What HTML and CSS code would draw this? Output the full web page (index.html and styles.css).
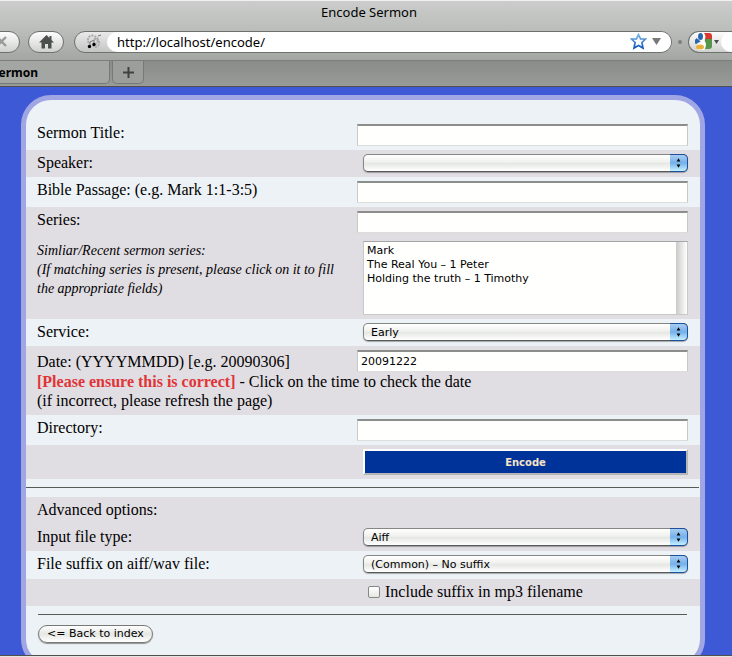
FILE: index.html
```html
<!DOCTYPE html>
<html lang="en">
<head>
<meta charset="UTF-8">
<meta name="viewport" content="width=device-width, initial-scale=1.0">
<title>Encode Sermon</title>
<link rel="stylesheet" href="styles.css">
</head>
<body>
<header class="browser">
    <div class="titlebar">Encode Sermon</div>
    <div class="toolbar">
        <button type="button" class="pill stop" aria-label="Stop">
            <svg width="12" height="12" viewBox="0 0 12 12"><path d="M1 1L10 10M10 1L1 10" stroke="#999b99" stroke-width="2.4" fill="none"/></svg>
        </button>
        <button type="button" class="pill home" aria-label="Home">
            <svg width="15" height="14" viewBox="0 0 15 14"><path d="M7.5 0L10.5 3V1H12.500V5L15 7.500H12.500V13.500H9V9H6V13.500H2.500V7.500H0Z" fill="#4c504d"/></svg>
        </button>
        <div class="location">
            <span class="favicon">
                <svg width="17" height="16" viewBox="0 0 17 16"><path d="M3 9C0 5 4 0 8 2C12 3 13 7 10 10M8 5C12 4 15 8 12 12C10 14 7 13 8 11" stroke="#a9aaa9" stroke-width="2" stroke-dasharray="2 1" fill="none"/><path d="M4 12V8L8 6V10" stroke="#777" fill="none"/><circle cx="3.500" cy="12.500" r="1.700"/><circle cx="8" cy="10.500" r="1.700"/><path d="M12 2L15 1" stroke="#777"/></svg>
            </span>
            <div class="urlbox">
                <input type="text" class="url" aria-label="Address" value="http://localhost/encode/">
                <svg width="17" height="17" viewBox="0 0 17 17"><defs><linearGradient id="star" x1="0" y1="0" x2="0" y2="1"><stop offset="0" stop-color="#79b2e3"/><stop offset="1" stop-color="#1458b8"/></linearGradient></defs><path d="M8.500 1.500L10.600 6H15.500L11.900 9.500L13 15L8.500 12.500L4 15L5.100 9.500L1.500 6H6.400Z" fill="#f7fbff" stroke="url(#star)" stroke-width="1.700"/></svg>
                <svg class="drop" width="9" height="7" viewBox="0 0 9 7"><path d="M0 0H9L4.500 7Z" fill="#777977"/></svg>
            </div>
        </div>
        <span class="grip"></span>
        <div class="search">
            <svg width="17" height="17" viewBox="0 0 17 17"><path d="M8 0H14Q17 0 17 3V6H8Z" fill="#d8382f"/><path d="M10 6H17V13Q17 16 14 16H9Z" fill="#55964c"/><path d="M1 5L6 8L1 11Z" fill="#2967ac"/><path d="M9 0Q12 4 9 7Q13 12 9 17H3Q0 13 3 11L7 9Q2 7 3 0Z" fill="#fff"/><ellipse cx="5.500" cy="3.500" rx="2.500" ry="3.500" fill="#2967ac"/><path d="M0 6L4 8.500L0 11Z" fill="#2967ac"/><ellipse cx="5" cy="14" rx="4" ry="2.500" fill="#e7b13c"/></svg>
            <svg width="5" height="4" viewBox="0 0 5 4"><path d="M0 0H5L2.500 4Z" fill="#4c504d"/></svg>
            <span class="searchbox"></span>
        </div>
    </div>
    <div class="tabs">
        <div class="tab">Sermon</div>
        <button type="button" class="newtab" aria-label="New tab">
            <svg width="11" height="11" viewBox="0 0 11 11"><path d="M5.500 0V11M0 5.500H11" stroke="#3f423f" stroke-width="2"/></svg>
        </button>
    </div>
</header>

<main class="page">
    <form class="card">
        <div class="row">
            <label for="title">Sermon Title:</label>
            <input type="text" class="text" id="title">
        </div>
        <div class="row short dark">
            <label for="speaker">Speaker:</label>
            <div class="popup"><select id="speaker"><option></option></select><svg width="18" height="16" viewBox="0 0 18 16"><path d="M7 6.500L9 3L11 6.500ZM7 9.500L9 13L11 9.500Z"/></svg></div>
        </div>
        <div class="row">
            <label for="passage">Bible Passage: (e.g. Mark 1:1-3:5)</label>
            <input type="text" class="text" id="passage">
        </div>
        <div class="row dark">
            <label for="series">Series:</label>
            <input type="text" class="text" id="series">
        </div>
        <div class="row recent dark">
            <label for="recent" class="hint">Simliar/Recent sermon series:<br>(If matching series is present, please click on it to fill the appropriate fields)</label>
            <select class="list" id="recent" size="5">
                <option>Mark</option>
                <option>The Real You – 1 Peter</option>
                <option>Holding the truth – 1 Timothy</option>
            </select>
        </div>
        <div class="row short">
            <label for="service">Service:</label>
            <div class="popup"><select id="service"><option>Early</option></select><svg width="18" height="16" viewBox="0 0 18 16"><path d="M7 6.500L9 3L11 6.500ZM7 9.500L9 13L11 9.500Z"/></svg></div>
        </div>
        <div class="row date dark">
            <label for="date">Date: (YYYYMMDD) [e.g. 20090306]</label>
            <input type="text" class="text" id="date" value="20091222">
            <p class="note"><strong>[Please ensure this is correct]</strong> - Click on the time to check the date<br>(if incorrect, please refresh the page)</p>
        </div>
        <div class="row">
            <label for="directory">Directory:</label>
            <input type="text" class="text" id="directory">
        </div>
        <div class="row submit dark">
            <button type="submit" class="encode">Encode</button>
        </div>
        <hr class="divider">
        <div class="row short dark">
            <span class="heading">Advanced options:</span>
        </div>
        <div class="row short dark">
            <label for="filetype">Input file type:</label>
            <div class="popup"><select id="filetype"><option>Aiff</option></select><svg width="18" height="16" viewBox="0 0 18 16"><path d="M7 6.500L9 3L11 6.500ZM7 9.500L9 13L11 9.500Z"/></svg></div>
        </div>
        <div class="row suffix">
            <label for="suffix">File suffix on aiff/wav file:</label>
            <div class="popup"><select id="suffix"><option>(Common) – No suffix</option></select><svg width="18" height="16" viewBox="0 0 18 16"><path d="M7 6.500L9 3L11 6.500ZM7 9.500L9 13L11 9.500Z"/></svg></div>
        </div>
        <div class="row short dark">
            <div class="check">
                <input type="checkbox" id="include">
                <label for="include">Include suffix in mp3 filename</label>
            </div>
        </div>
        <div class="footer">
            <button type="button" class="back">&lt;= Back to index</button>
        </div>
    </form>
</main>
</body>
</html>
```
FILE: styles.css
```css
* {
    box-sizing: border-box;
}
body {
    margin: 0;
    height: 100vh;
    display: flex;
    flex-direction: column;
    overflow: hidden;
    background: #e4e6e4;
    font-family: "Liberation Serif", serif;
    font-size: 16px;
    line-height: 19px;
    color: #000;
}
button, input, select {
    font-family: "DejaVu Sans", sans-serif;
    font-size: 11px;
    margin: 0;
    color: #000;
}
svg {
    display: block;
    flex: none;
}

/* browser window */
.browser {
    flex: none;
    font-family: "Noto Sans", sans-serif;
    border-bottom: 1px solid #50514f;
}
.titlebar {
    height: 27px;
    padding: 2px 0 0 6px;
    border-top: 1px solid #f0f1f0;
    background: linear-gradient(#cbcccb, #bdbfbd);
    font-size: 13px;
    text-align: center;
}
.toolbar {
    display: flex;
    align-items: center;
    height: 34px;
    padding-bottom: 4px;
    background: linear-gradient(#bdbfbd, #a4a6a4);
    border-bottom: 1px solid #7c7e7b;
}
.pill {
    display: flex;
    align-items: center;
    justify-content: center;
    width: 36px;
    height: 22px;
    padding: 0;
    border: 1px solid #6f716f;
    border-radius: 11px;
    background: linear-gradient(#fdfdfd, #cfd1cf);
}
.stop {
    margin-left: -16px;
    margin-right: 8px;
}
.home {
    margin-right: 10px;
}
.location {
    display: flex;
    flex: 1;
    height: 22px;
    border: 1px solid #6f716f;
    border-radius: 11px;
    background: linear-gradient(#e9eae9, #c4c6c4);
}
.favicon {
    width: 32px;
    padding: 2px 0 0 11px;
}
.urlbox {
    display: flex;
    flex: 1;
    align-items: center;
    padding: 0 10px;
    border-radius: 10px;
    background: #fff;
}
.url {
    flex: 1;
    min-width: 0;
    padding: 0;
    border: 0;
    background: none;
    font-family: "Noto Sans", sans-serif;
    font-size: 13px;
}
.drop {
    margin-left: 5px;
}
.grip {
    width: 4px;
    height: 4px;
    margin: 0 6px;
    border-radius: 2px;
    background: #7c7e7b;
}
.search {
    display: flex;
    align-items: center;
    gap: 2px;
    width: 44px;
    height: 22px;
    padding-left: 6px;
    border: 1px solid #6f716f;
    border-right: 0;
    border-radius: 11px 0 0 11px;
    background: linear-gradient(#fdfdfd, #cfd1cf);
}
.searchbox {
    flex: 1;
    height: 20px;
    border-radius: 10px 0 0 10px;
    background: #fff;
}
.tabs {
    display: flex;
    height: 25px;
    background: linear-gradient(#8a8c89, #999b98);
}
.tab {
    display: flex;
    justify-content: flex-end;
    width: 110px;
    height: 23px;
    padding: 2px 71px 0 0;
    overflow: hidden;
    border: 1px solid #777976;
    border-width: 0 1px 1px 0;
    border-radius: 0 0 5px 0;
    background: #a4a6a3;
    font-size: 12px;
    font-weight: bold;
}
.newtab {
    display: flex;
    align-items: center;
    justify-content: center;
    width: 32px;
    height: 23px;
    margin-left: 2px;
    padding: 0;
    border: 1px solid #777976;
    border-top: 0;
    border-radius: 0 0 5px 5px;
    background: #9c9e9b;
}

/* page */
.page {
    flex: 1;
    min-height: 0;
    margin-bottom: 1px;
    padding: 8px 27px 0 21px;
    overflow: hidden;
    background: #3e59d6;
    border-bottom: 1px solid #50514f;
}
.card {
    padding-top: 20px;
    border: 5px solid #a0a6e3;
    border-radius: 30px;
    background: #edf2f6;
}
.row {
    display: grid;
    grid-template-columns: 320px 1fr;
    align-items: start;
    min-height: 30px;
    padding: 3px 12px 3px 11px;
}
.dark {
    background: #e0dde3;
}
.short {
    min-height: 27px;
}
.text {
    width: 100%;
    height: 22px;
    margin-top: 1px;
    padding: 0 3px;
    border: 1px solid #c8cac8;
    border-top: 2px solid #8c8e8c;
    border-bottom-color: #dcdedc;
    background: #fffffd;
}
.popup {
    position: relative;
    margin: 1px 0 0 6px;
}
.popup select {
    display: block;
    appearance: none;
    width: 100%;
    height: 18px;
    padding: 0 24px 0 7px;
    border: 1px solid #858785;
    border-bottom-color: #585a58;
    border-radius: 5px;
    background: linear-gradient(#fff, #f0f1ee 45%, #e5e7e3 52%, #fff);
    box-shadow: 0 1px 1px rgba(0, 0, 0, 0.3);
}
.popup svg {
    position: absolute;
    top: 0;
    right: 0;
    height: 18px;
    border: 1px solid #1c4fa0;
    border-left: 0;
    border-radius: 0 5px 5px 0;
    background: linear-gradient(#a9cdf0, #74b0ea 50%, #c4f0ff);
    pointer-events: none;
}
.recent {
    min-height: 82px;
}
.hint {
    padding: 1px 8px 0 0;
    font-size: 14px;
    font-style: italic;
}
.list {
    height: 74px;
    margin: 1px 0 0 6px;
    padding: 2px 1px;
    overflow: hidden;
    border: 1px solid #c8cac8;
    border-top-color: #a4a6a4;
    border-radius: 0;
    background: linear-gradient(to right, #c9cac8, #fff) right / 11px 100% no-repeat #fffffd;
}
.list option {
    height: 14px;
    min-height: 0;
    padding: 0 2px;
    line-height: 14px;
}
.date {
    padding-bottom: 5px;
}
.date label {
    padding-top: 3px;
}
.note {
    grid-column: 1 / 3;
    margin: 0;
}
.note strong {
    color: #e03436;
}
.submit {
    min-height: 34px;
}
.encode {
    grid-column: 2;
    height: 26px;
    margin: 1px 0 0 6px;
    border: 2px solid #fff;
    border-right-color: #b5b5b8;
    border-bottom-color: #b5b5b8;
    background: #003399;
    color: #f7e3c6;
    font-size: 10px;
    font-weight: bold;
}
.divider {
    height: 1px;
    margin: 8px 1px 9px 0;
    border: 0;
    background: #585a58;
}
.suffix {
    min-height: 28px;
}
.check {
    grid-column: 2;
    display: flex;
    align-items: center;
    gap: 5px;
    padding-left: 11px;
}
.check input {
    appearance: none;
    width: 12px;
    height: 12px;
    border: 1px solid #858785;
    border-radius: 2px;
    background: linear-gradient(#fff, #e5e7e3);
}
.footer {
    height: 50px;
    margin: 8px 13px 0 12px;
    padding-top: 10px;
    border-top: 1px solid #585a58;
}
.back {
    display: block;
    height: 18px;
    padding: 0 8px;
    border: 1px solid #777977;
    border-radius: 9px;
    background: linear-gradient(#fff, #e5e7e3 50%, #fff);
    box-shadow: 0 1px 1px rgba(0, 0, 0, 0.4);
    line-height: 16px;
}
```
